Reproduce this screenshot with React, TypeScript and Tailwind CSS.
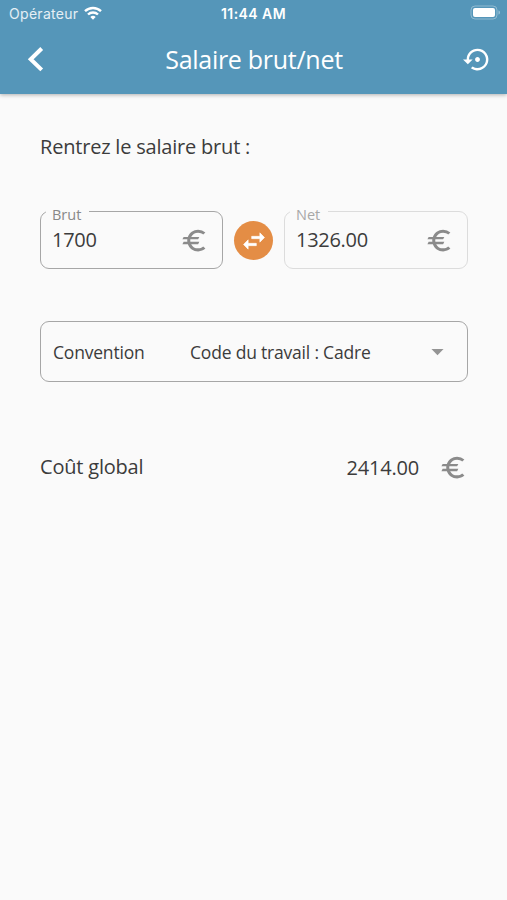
import type { ReactNode } from "react"
import { MdArrowDropDown, MdEuro, MdSettingsBackupRestore } from "react-icons/md"

const StatusBar = () => (
  <div className="grid h-7 grid-cols-3 items-center pl-[9px] pr-[6px] font-['Inter',sans-serif] text-[14px] leading-none text-white">
    <div className="flex items-center gap-[6px] text-white/85">
      <span className="tracking-[0.3px]">Opérateur</span>
      <svg viewBox="0 0 18 14" className="mb-[3px] h-[14px] w-[18px] fill-none stroke-white" strokeWidth="2.4">
        <path d="M1 5.2a11.5 11.5 0 0 1 16 0" />
        <path d="M4 8.5a7.2 7.2 0 0 1 10 0" />
        <path d="M9 13.8 6.3 11a3.9 3.9 0 0 1 5.4 0z" className="fill-white stroke-none" />
      </svg>
    </div>
    <span className="-ml-[3px] text-center text-[14px] font-semibold tracking-[0.45px]">11:44 AM</span>
    <svg viewBox="0 0 31 15" className="mb-[3px] h-[15px] w-[31px] justify-self-end">
      <rect x="1" y="1" width="26" height="13" rx="4" className="fill-none stroke-white/35" />
      <rect x="3" y="3" width="22" height="9" rx="2" className="fill-white" />
      <path d="M28.5 5.5c2 .6 2 3.4 0 4z" className="fill-white/40" />
    </svg>
  </div>
)

const Header = () => (
  <header className="h-[94px] bg-[#5596b9] text-white shadow-[0_1px_4px_rgba(0,0,0,0.3)]">
    <StatusBar />
    <div className="flex h-[63px] items-center justify-between pl-[21px] pr-[15px]">
      <button aria-label="Retour">
        <svg viewBox="0 0 29 29" className="size-[29px] fill-none stroke-current" strokeWidth="4">
          <path d="M20.7 3.5 9.7 14.2l11 10.7" />
        </svg>
      </button>
      <h1 className="-ml-[5px] text-[25px] leading-none tracking-[-0.28px]">Salaire brut/net</h1>
      <button aria-label="Réinitialiser">
        <MdSettingsBackupRestore className="size-[29px]" />
      </button>
    </div>
  </header>
)

const AmountField = ({ label, value, disabled }: { label: string; value: ReactNode; disabled?: boolean }) => (
  <fieldset
    className={`h-[66px] rounded-[9px] border pl-[5px] pr-[10px] ${
      disabled ? "border-[#dcdcdc]" : "border-[#a6a6a6]"
    }`}
  >
    <legend
      className={`h-4 pl-[6px] pr-2 text-[14.5px] leading-[24px] ${disabled ? "text-[#a8a8a8]" : "text-[#888]"}`}
    >
      {label}
    </legend>
    <div className="flex items-center justify-between pl-[6px] pr-[3px] text-[20px] leading-[42px] tracking-[-0.3px]">
      <span>{value}</span>
      <MdEuro className="mt-px size-[29px] text-[#8b8b8b]" />
    </div>
  </fieldset>
)

export default function App() {
  return (
    <div className="min-h-[900px] bg-[#fafafa] font-['Open_Sans',sans-serif] text-[#3c3c3c]">
      <Header />
      <main className="pl-10 pr-[39px] pt-[38px]">
        <p className="text-[20px] leading-[30px] tracking-[-0.2px]">Rentrez le salaire brut :</p>

        <div className="mt-[41px] grid grid-cols-[183px_61px_184px] items-start">
          <AmountField label="Brut" value="1700" />
          <button
            aria-label="Inverser"
            className="mt-[18px] grid size-[39px] place-items-center justify-self-center rounded-full bg-[#e48d45] text-white"
          >
            <svg viewBox="0 0 24 24" className="size-[28px] fill-current stroke-current" strokeWidth="0.5">
              <path d="M6.99 11 3 15l3.99 4v-3H14v-2H6.99zM21 9l-3.99-4v3H10v2h7.01v3z" />
            </svg>
          </button>
          <AmountField label="Net" value="1326.00" disabled />
        </div>

        <div className="mt-[52px] flex h-[61px] items-center rounded-[9px] border border-[#a6a6a6] px-3 text-[17.5px] tracking-[-0.2px]">
          <span className="mt-[2px] w-[137px]">Convention</span>
          <span className="mt-[2px]">Code du travail : Cadre</span>
          <MdArrowDropDown className="ml-auto mr-[3px] size-[29px] text-[#949494]" />
        </div>

        <div className="mt-[70px] flex h-[30px] items-center text-[20px] tracking-[-0.2px]">
          <span>Coût global</span>
          <span className="ml-auto mr-5 mt-px">2414.00</span>
          <MdEuro className="mt-px size-[29px] text-[#8b8b8b]" />
        </div>
      </main>
    </div>
  )
}
